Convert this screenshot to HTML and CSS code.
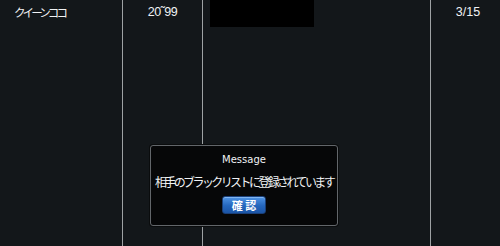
FILE: index.html
```html
<!DOCTYPE html>
<html lang="ja">
<head>
<meta charset="utf-8">
<link rel="stylesheet" href="styles.css">
</head>
<body>
<div class="table">
  <div class="cell name">クイーンココ</div>
  <div class="cell age">20˜99</div>
  <div class="cell info"><div class="blackbox"></div></div>
  <div class="cell count">3/15</div>
</div>
<div class="dialog">
  <div class="title">Message</div>
  <div class="msg">相手のブラックリストに登録されています</div>
  <div class="btn">確 認</div>
</div>
</body>
</html>
```
FILE: styles.css
```css
html, body {
  margin: 0;
  padding: 0;
  width: 500px;
  height: 246px;
  background: #13171a;
  overflow: hidden;
  font-family: "Liberation Sans", "Noto Sans CJK JP", sans-serif;
  color: #f0f2f4;
}
.table {
  display: grid;
  grid-template-columns: 123px 80px 228px 69px;
  height: 246px;
}
.cell {
  box-sizing: border-box;
  border-right: 1px solid #9ea2a4;
  font-size: 12.5px;
  padding-top: 5px;
}
.cell.count { border-right: none; text-align: center; padding-left: 5px; }
.name {
  padding-left: 14px;
  font-family: "Noto Sans CJK JP", sans-serif;
  font-size: 11.5px;
  letter-spacing: -2.9px;
  padding-top: 4px;
}
.age { text-align: center; letter-spacing: -0.5px; }
.info { padding-top: 0; padding-left: 7px; }
.blackbox {
  width: 104px;
  height: 27px;
  background: #000;
}
.dialog {
  position: absolute;
  left: 150px;
  top: 145px;
  width: 188px;
  height: 81px;
  box-sizing: border-box;
  background: #060708;
  border: 1px solid #62666a;
  border-radius: 3px;
  box-shadow: 0 0 0 1px #0a0c0d;
  display: flex;
  flex-direction: column;
  align-items: center;
}
.title {
  font-family: "DejaVu Sans", sans-serif;
  font-size: 10px;
  margin-top: 7px;
  line-height: 13px;
}
.msg {
  font-family: "Noto Sans CJK JP", sans-serif;
  font-size: 12px;
  letter-spacing: -2.6px;
  line-height: 16px;
  margin-top: 8px;
  white-space: nowrap;
}
.btn {
  margin-top: 6px;
  width: 44px;
  height: 18px;
  box-sizing: border-box;
  border-radius: 3px;
  background: linear-gradient(#4f94e4, #2466bd 55%, #1b55a6);
  border: 1px solid #1a3f78;
  box-shadow: inset 0 1px 0 #7fb4f0;
  color: #fff;
  font-family: "Noto Sans CJK JP", sans-serif;
  font-weight: bold;
  font-size: 11px;
  line-height: 16px;
  text-align: center;
}
```
